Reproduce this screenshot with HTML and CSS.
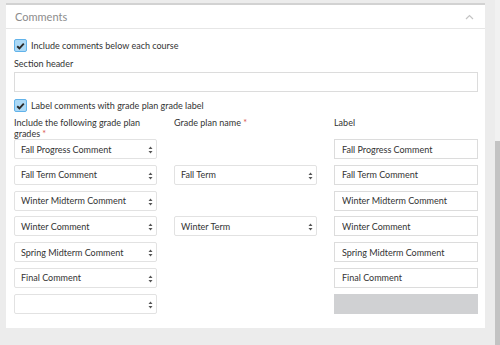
FILE: index.html
```html
<!DOCTYPE html>
<html lang="en">
<head>
  <meta charset="UTF-8" />
  <title>Comments</title>
  <link rel="stylesheet" href="styles.css">
</head>
<body>

  <!-- Comments panel -->
  <div class="panel">
    <div class="panel-header">
      <span>Comments</span>
      <svg class="chevron" width="9" height="6" viewBox="0 0 9 6"><path d="M1 5 L4.5 1.5 L8 5" fill="none" stroke="#c4c4c4" stroke-width="1.2"/></svg>
    </div>

    <div class="panel-body">
      <label class="check">
        <span class="box"><svg width="9" height="8" viewBox="0 0 9 8"><path d="M1.2 4.2 L3.4 6.3 L7.8 1.6" fill="none" stroke="#2b2b2b" stroke-width="1.9"/></svg></span>
        Include comments below each course
      </label>

      <div class="field-label">Section header</div>
      <input class="text-input wide" type="text" />

      <label class="check">
        <span class="box"><svg width="9" height="8" viewBox="0 0 9 8"><path d="M1.2 4.2 L3.4 6.3 L7.8 1.6" fill="none" stroke="#2b2b2b" stroke-width="1.9"/></svg></span>
        Label comments with grade plan grade label
      </label>

      <div class="grade-grid heads">
        <div class="col-head"><span class="line">Include the following grade plan</span><span>grades&nbsp;</span><span class="req">*</span></div>
        <div class="col-head">Grade plan name&nbsp;<span class="req">*</span></div>
        <div class="col-head">Label</div>
      </div>
      <div class="grade-grid rows" id="gradeGrid"></div>
    </div>
  </div>

  <div class="scroll-track"><div class="scroll-thumb"></div></div>

  <script>
    const rows = [
      ['Fall Progress Comment', '', 'Fall Progress Comment'],
      ['Fall Term Comment', 'Fall Term', 'Fall Term Comment'],
      ['Winter Midterm Comment', '', 'Winter Midterm Comment'],
      ['Winter Comment', 'Winter Term', 'Winter Comment'],
      ['Spring Midterm Comment', '', 'Spring Midterm Comment'],
      ['Final Comment', '', 'Final Comment'],
      ['', null, null]
    ];

    const arrow = '<svg class="arrow" width="5" height="8" viewBox="0 0 5 8"><path d="M2.5 0.5 L4.5 3 L0.5 3 Z M2.5 7.5 L4.5 5 L0.5 5 Z" fill="#555"/></svg>';

    function selectBox(text) {
      const el = document.createElement('div');
      el.className = 'select';
      el.innerHTML = '<span></span>' + arrow;
      el.firstChild.textContent = text;
      return el;
    }

    const grid = document.getElementById('gradeGrid');
    rows.forEach(([grade, plan, label]) => {
      grid.appendChild(selectBox(grade));

      if (plan) {
        grid.appendChild(selectBox(plan));
      } else {
        grid.appendChild(document.createElement('div'));
      }

      if (label === null) {
        const blank = document.createElement('div');
        blank.className = 'text-input disabled';
        grid.appendChild(blank);
      } else {
        const input = document.createElement('input');
        input.className = 'text-input';
        input.type = 'text';
        input.value = label;
        grid.appendChild(input);
      }
    });
  </script>

</body>
</html>
```

FILE: styles.css
```css
/* Reset */
* { margin: 0; padding: 0; box-sizing: border-box; }

body {
  font-family: 'Lato', sans-serif;
  font-size: 9px;
  color: #333;
  background: #ececec;
  height: 100vh;
  overflow: hidden;
}

/* Panel */
.panel {
  width: 479px;
  margin: 3px 0 0 6px;
  background: #fff;
  border-top: 2px solid #d2d2d2;
}

.panel-header {
  height: 24px;
  display: flex;
  align-items: center;
  justify-content: space-between;
  padding: 0 11px 0 9px;
  font-size: 11px;
  color: #8c8c8c;
  border-bottom: 1px solid #e6e6e6;
}

.panel-body {
  padding: 10px 7px 14px 8px;
}

/* Checkboxes */
.check {
  display: flex;
  align-items: center;
  height: 13px;
  gap: 4px;
  margin-bottom: 6px;
}
.box {
  width: 13px;
  height: 13px;
  display: flex;
  align-items: center;
  justify-content: center;
  background: #acd9f6;
  border: 1px solid #62b3ea;
  border-radius: 2px;
}

.field-label {
  line-height: 12px;
  margin-bottom: 2px;
}

/* Inputs */
.text-input {
  display: block;
  width: 100%;
  height: 20px;
  border: 1px solid #dcdcdc;
  background: #fff;
  font: inherit;
  color: #333;
  padding: 0 7px;
  outline: none;
}
.text-input.wide { margin-bottom: 7px; }
.text-input.disabled {
  background: #d0d1d3;
  border-color: #d0d1d3;
}

/* Grade grid */
.grade-grid {
  display: grid;
  grid-template-columns: 143px 143px 144px;
  column-gap: 17px;
}
.grade-grid.heads {
  height: 22px;
  margin-top: -1px;
}
.grade-grid.rows { row-gap: 5.8px; }

.col-head { line-height: 11px; }
.col-head .line { display: block; }
.req { color: #d9534f; }

.select {
  position: relative;
  height: 20px;
  border: 1px solid #e2e2e2;
  border-radius: 2px;
  display: flex;
  align-items: center;
  padding-left: 6px;
}
.select .arrow {
  position: absolute;
  right: 3px;
  top: 6px;
}

/* Page scrollbar */
.scroll-track {
  position: fixed;
  top: 0;
  right: 0;
  width: 5px;
  height: 100%;
  background: #f1f1f1;
}
.scroll-thumb {
  margin-top: 141px;
  height: 204px;
  background: #c3c3c3;
}
```
